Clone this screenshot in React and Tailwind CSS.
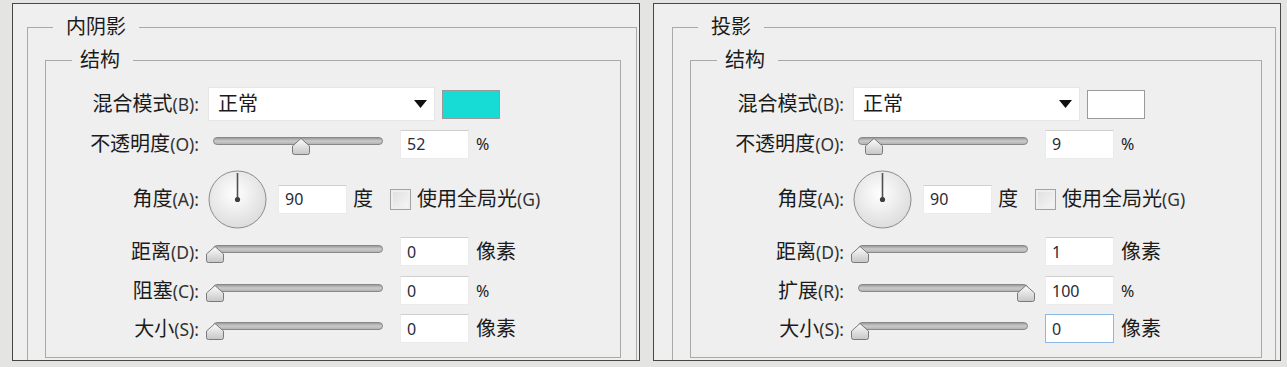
const font = "font-['Noto_Sans','Noto_Sans_CJK_SC',sans-serif]";

function Label({ cn, k }) {
  return (
    <div className="w-[153px] shrink-0 text-right text-[20px] leading-6 text-[#1b1b1b]">
      {cn}
      <span className="text-[17.5px] text-[#333]">({k}):</span>
    </div>
  );
}

function Field({ value, focus }) {
  return (
    <div
      className={
        "flex h-[29px] w-[69px] shrink-0 items-center bg-white pl-[6px] text-[16px] text-[#2a2a3a] border " +
        (focus ? "border-[#8db8e6]" : "border-[#ebebeb] border-t-[#cfcfcf]")
      }
    >
      {value}
    </div>
  );
}

function Thumb() {
  return (
    <svg width="20" height="19" viewBox="0 0 20 19">
      <defs>
        <linearGradient id="thumbfill" x1="0" y1="0" x2="0" y2="1">
          <stop offset="0" stopColor="#fdfdfd" />
          <stop offset="1" stopColor="#c6c6c6" />
        </linearGradient>
      </defs>
      <path
        d="M10 1.5 L18.5 9 L18.5 15.5 Q18.5 17.5 16.5 17.5 L3.5 17.5 Q1.5 17.5 1.5 15.5 L1.5 9 Z"
        fill="url(#thumbfill)"
        stroke="#7a7a7a"
        strokeLinejoin="round"
      />
    </svg>
  );
}

function Slider({ pct }) {
  return (
    <div className="relative ml-[6px] h-[30px] w-[183px] shrink-0">
      <div className="absolute left-[8px] top-[8px] h-[8px] w-[170px] rounded-full border border-[#888] bg-linear-to-b from-[#9c9c9c] via-[#cbcbcb] to-[#b3b3b3]" />
      <div className="absolute top-[8px]" style={{ left: -0.5 + pct * 1.665 }}>
        <Thumb />
      </div>
    </div>
  );
}

function SliderRow({ cn, k, pct, value, unit, focus, mt }) {
  return (
    <div className={"flex h-[29px] items-center " + mt}>
      <Label cn={cn} k={k} />
      <Slider pct={pct} />
      <div className="ml-[12px]">
        <Field value={value} focus={focus} />
      </div>
      <div className={"ml-[7px] text-[#1b1b1b] " + (unit === "%" ? "text-[16px]" : "text-[20px]")}>{unit}</div>
    </div>
  );
}

function Dial({ id }) {
  return (
    <svg width="59" height="59" viewBox="0 0 59 59" className="ml-[9px] shrink-0">
      <defs>
        <radialGradient id={id} cx="45%" cy="40%" r="65%">
          <stop offset="0" stopColor="#ffffff" />
          <stop offset="1" stopColor="#dadada" />
        </radialGradient>
      </defs>
      <circle cx="29.5" cy="29.5" r="28.5" fill={"url(#" + id + ")"} stroke="#8c8c8c" />
      <line x1="29.5" y1="29.5" x2="29.5" y2="3" stroke="#505050" strokeWidth="1.6" />
      <circle cx="29.5" cy="29.5" r="2.6" fill="#3e3e3e" />
    </svg>
  );
}

function Panel({ title, color, rows, panelPad, outerW, dialId }) {
  return (
    <div className={"h-[358px] w-[628px] shrink-0 overflow-hidden border border-[#474747] bg-[#efefef] pt-[11px] " + panelPad}>
      <fieldset className={"border border-[#a9a9a9] pb-4 pl-[17px] " + outerW}>
        <legend className="ml-[8px] px-[13px] text-[20px] leading-6 text-[#1b1b1b]">{title}</legend>
        <fieldset className="mt-[9px] border border-[#a9a9a9] pb-[14px]">
          <legend className="ml-[26px] px-[8px] pr-[13px] text-[20px] leading-6 text-[#1b1b1b]">结构</legend>

          <div className="mt-[15px] flex h-[34px] items-center">
            <Label cn="混合模式" k="B" />
            <div className="ml-[9px] flex h-[34px] w-[227px] items-center justify-between border border-[#e6e6e6] bg-white pl-[9px] pr-[7px] text-[20px] text-[#1b1b1b]">
              <span>正常</span>
              <svg width="13" height="8" viewBox="0 0 13 8">
                <polygon points="0,0 13,0 6.5,8" fill="#111" />
              </svg>
            </div>
            <div className={"ml-[7px] h-[29px] w-[58px] border border-[#9a9a9a] " + color} />
          </div>

          <SliderRow cn="不透明度" k="O" pct={rows.opacity.pct} value={rows.opacity.value} unit="%" mt="mt-[8px] h-[30px]" />

          <div className="mt-[11px] flex h-[58px] items-center">
            <Label cn="角度" k="A" />
            <Dial id={dialId} />
            <div className="ml-[11px]">
              <Field value="90" />
            </div>
            <div className="ml-[6px] text-[20px] text-[#1b1b1b]">度</div>
            <div className="ml-[17px] h-[21px] w-[21px] border border-[#a3a3a3] bg-linear-to-br from-[#dedede] to-[#f7f7f7] shadow-[inset_0_0_0_2px_#efefef]" />
            <div className="ml-[6px] text-[20px] text-[#1b1b1b]">
              使用全局光<span className="text-[17.5px] text-[#333]">(G)</span>
            </div>
          </div>

          {rows.sliders.map((r, i) => (
            <SliderRow
              key={r.cn}
              cn={r.cn}
              k={r.k}
              pct={r.pct}
              value={r.value}
              unit={r.unit}
              focus={r.focus}
              mt={i === 0 ? "mt-[9px]" : i === 1 ? "mt-[10px]" : "mt-[9px]"}
            />
          ))}
        </fieldset>
      </fieldset>
    </div>
  );
}

export default function App() {
  const inner = {
    opacity: { pct: 52, value: "52" },
    sliders: [
      { cn: "距离", k: "D", pct: 0, value: "0", unit: "像素" },
      { cn: "阻塞", k: "C", pct: 0, value: "0", unit: "%" },
      { cn: "大小", k: "S", pct: 0, value: "0", unit: "像素" },
    ],
  };
  const drop = {
    opacity: { pct: 9, value: "9" },
    sliders: [
      { cn: "距离", k: "D", pct: 0, value: "1", unit: "像素" },
      { cn: "扩展", k: "R", pct: 100, value: "100", unit: "%" },
      { cn: "大小", k: "S", pct: 0, value: "0", unit: "像素", focus: true },
    ],
  };

  return (
    <div className={"flex h-[367px] w-[1287px] gap-[13px] bg-[#e4e4e2] pl-[12px] pt-[3px] " + font}>
      <Panel title="内阴影" color="bg-[#17dcd6]" rows={inner} panelPad="pl-[14px]" outerW="w-[610px] pr-[15px]" dialId="dialA" />
      <Panel title="投影" color="bg-white" rows={drop} panelPad="pl-[18px]" outerW="w-[604px] pr-[13px]" dialId="dialB" />
    </div>
  );
}
